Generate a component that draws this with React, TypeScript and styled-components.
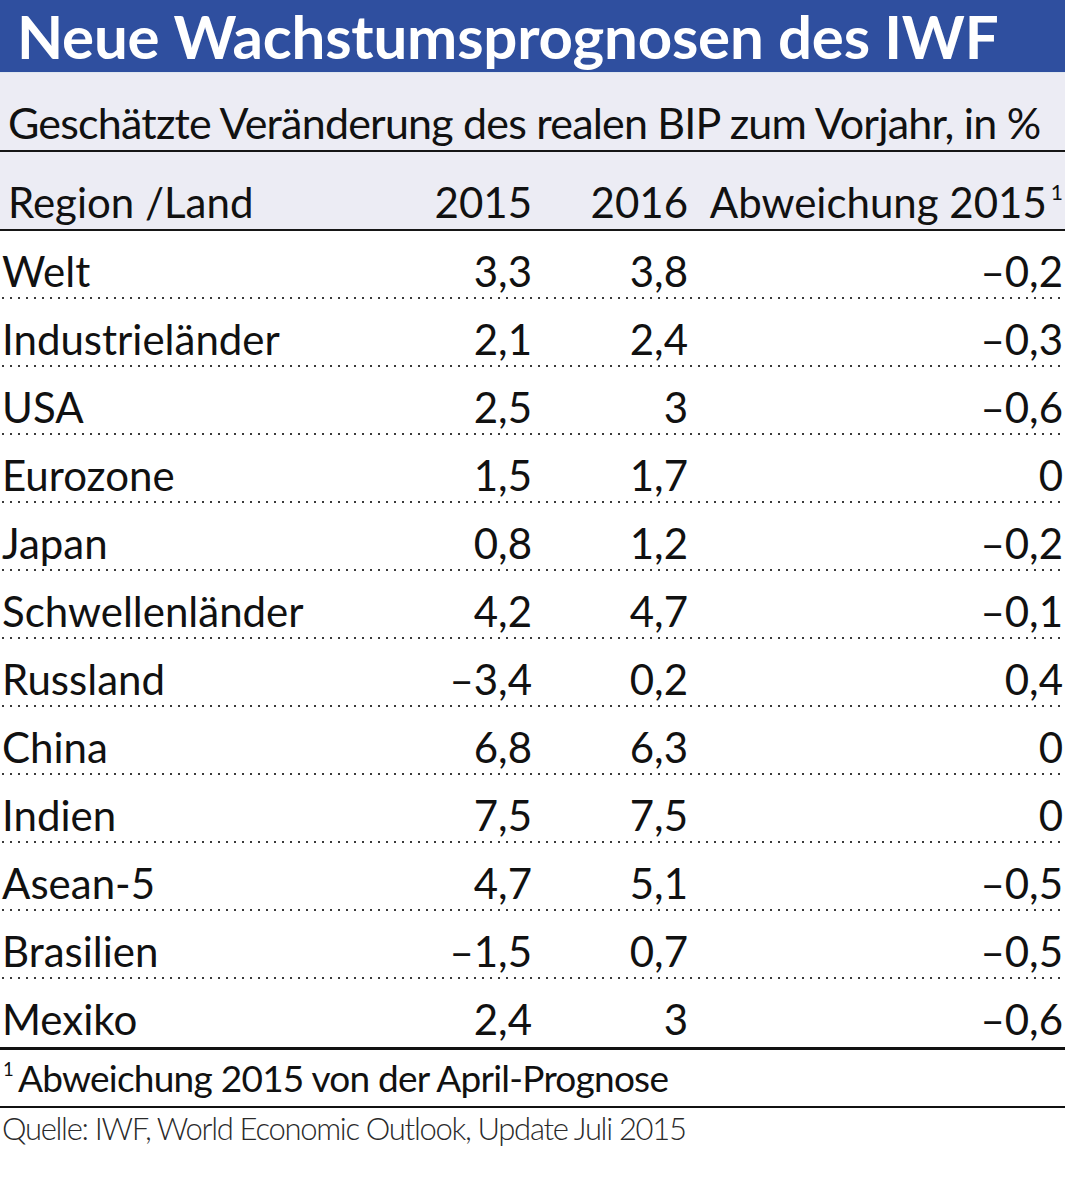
import React from "react";
import styled, { createGlobalStyle } from "styled-components";

const Global = createGlobalStyle`
  html, body { margin: 0; padding: 0; background: #ffffff; }
  body { font-family: Lato, "Open Sans", sans-serif; color: #111; }
  * { box-sizing: border-box; }
`;

const Page = styled.div`
  width: 1065px;
  background: #fff;
`;

const TitleBar = styled.h1`
  margin: 0;
  height: 73px;
  background: #2f4f9f;
  color: #fff;
  font-family: Lato, sans-serif;
  font-weight: 700;
  font-size: 60px;
  line-height: 73px;
  padding-left: 17px;
  letter-spacing: -0.2px;
  white-space: nowrap;
  border-bottom: 1px solid #dfe6ef;
`;

const HeadBand = styled.div`
  background: #ececf4;
`;

const Subtitle = styled.div`
  height: 79px;
  padding: 24px 0 0 8px;
  font-size: 43px;
  letter-spacing: -0.8px;
  line-height: 52px;
  white-space: nowrap;
  border-bottom: 2px solid #161616;
`;

const Grid = styled.div`
  display: grid;
  grid-template-columns: 402px 130px 156px 375px;
  align-items: start;
`;

const HeadRow = styled(Grid)`
  height: 79px;
  padding-top: 25px;
  font-size: 42px;
  line-height: 50px;
  border-bottom: 2px solid #161616;
`;

const Row = styled(Grid)<{ $last?: boolean }>`
  height: 68px;
  padding-top: 15px;
  font-size: 42px;
  line-height: 50px;
  background-image: ${(p) =>
    p.$last ? "none" : "linear-gradient(to right, #3a3a3a 2px, transparent 2px)"};
  background-size: 8px 2px;
  background-repeat: repeat-x;
  background-position: 2px 100%;
`;

const Label = styled.div<{ $inset?: number }>`
  padding-left: ${(p) => p.$inset ?? 2}px;
  white-space: nowrap;
`;

const Num = styled.div`
  text-align: right;
  white-space: nowrap;
`;

const Sup = styled.sup`
  font-size: 0.5em;
  vertical-align: 0.85em;
  line-height: 0;
  margin-left: 4px;
`;

const Footnote = styled.div`
  height: 61px;
  border-top: 3px solid #111;
  border-bottom: 2px solid #111;
  padding: 6px 0 0 3px;
  font-size: 37px;
  letter-spacing: -0.75px;
  line-height: 44px;
  white-space: nowrap;
`;

const FootSup = styled.sup`
  font-size: 0.5em;
  vertical-align: 0.85em;
  line-height: 0;
  margin-right: 5px;
`;

const Source = styled.div`
  padding: 1px 0 0 2px;
  font-size: 31px;
  font-weight: 300;
  letter-spacing: -1.3px;
  line-height: 38px;
  color: #2a2a2a;
  white-space: nowrap;
  height: 71px;
`;

type R = [string, string, string, string];

const rows: R[] = [
  ["Welt", "3,3", "3,8", "–0,2"],
  ["Industrieländer", "2,1", "2,4", "–0,3"],
  ["USA", "2,5", "3", "–0,6"],
  ["Eurozone", "1,5", "1,7", "0"],
  ["Japan", "0,8", "1,2", "–0,2"],
  ["Schwellenländer", "4,2", "4,7", "–0,1"],
  ["Russland", "–3,4", "0,2", "0,4"],
  ["China", "6,8", "6,3", "0"],
  ["Indien", "7,5", "7,5", "0"],
  ["Asean-5", "4,7", "5,1", "–0,5"],
  ["Brasilien", "–1,5", "0,7", "–0,5"],
  ["Mexiko", "2,4", "3", "–0,6"],
];

export default function App() {
  return (
    <Page>
      <Global />
      <TitleBar>Neue Wachstumsprognosen des IWF</TitleBar>
      <HeadBand>
        <Subtitle>Geschätzte Veränderung des realen BIP zum Vorjahr, in %</Subtitle>
        <HeadRow>
          <Label $inset={8}>Region /Land</Label>
          <Num>2015</Num>
          <Num>2016</Num>
          <Num>
            Abweichung 2015<Sup>1</Sup>
          </Num>
        </HeadRow>
      </HeadBand>
      {rows.map((r, i) => (
        <Row key={r[0]} $last={i === rows.length - 1}>
          <Label>{r[0]}</Label>
          <Num>{r[1]}</Num>
          <Num>{r[2]}</Num>
          <Num>{r[3]}</Num>
        </Row>
      ))}
      <Footnote>
        <FootSup>1</FootSup>Abweichung 2015 von der April-Prognose
      </Footnote>
      <Source>Quelle: IWF, World Economic Outlook, Update Juli 2015</Source>
    </Page>
  );
}
